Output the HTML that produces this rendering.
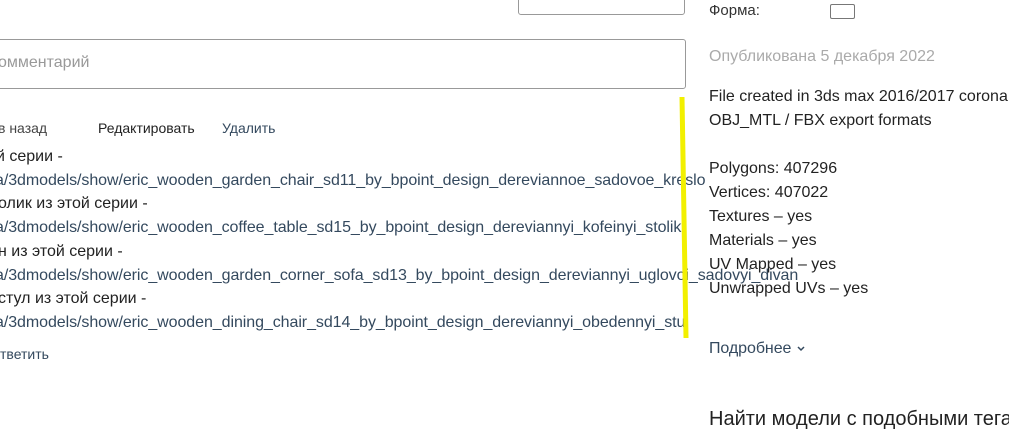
<!DOCTYPE html><html><head><meta charset="utf-8"><style>
body{margin:0;width:1009px;height:421px;overflow:hidden;background:#fff;font-family:"Liberation Sans",sans-serif;position:relative}
.a{position:absolute;white-space:nowrap;line-height:20px}
.t{font-size:16px;color:#222}
.l{font-size:16px;color:#34495e;letter-spacing:-0.07px}
</style></head><body>
<div style="position:absolute;left:518px;top:-6px;width:165px;height:19px;border:1px solid #999;border-radius:3px"></div>
<div style="position:absolute;left:-10px;top:39px;width:694px;height:48px;border:1px solid #999;border-radius:3px"></div>
<div class="a" style="left:-2px;top:53px;font-size:16px;color:#999">омментарий</div>
<div class="a" style="left:-2px;top:118px;font-size:14px;color:#444">в назад</div>
<div class="a" style="left:98px;top:118px;font-size:14px;color:#222">Редактировать</div>
<div class="a" style="left:222px;top:118px;font-size:14px;color:#34495e">Удалить</div>
<div class="a t" style="left:-4px;top:147px">й серии -</div>
<div class="a l" style="left:-5px;top:171px">a/3dmodels/show/eric_wooden_garden_chair_sd11_by_bpoint_design_dereviannoe_sadovoe_kreslo</div>
<div class="a t" style="left:-2px;top:194px">олик из этой серии -</div>
<div class="a l" style="left:-5px;top:218px">a/3dmodels/show/eric_wooden_coffee_table_sd15_by_bpoint_design_dereviannyi_kofeinyi_stolik</div>
<div class="a t" style="left:-2px;top:242px">н из этой серии -</div>
<div class="a l" style="left:-5px;top:266px">a/3dmodels/show/eric_wooden_garden_corner_sofa_sd13_by_bpoint_design_dereviannyi_uglovoi_sadovyi_divan</div>
<div class="a t" style="left:-2px;top:289px">стул из этой серии -</div>
<div class="a l" style="left:-5px;top:313px">a/3dmodels/show/eric_wooden_dining_chair_sd14_by_bpoint_design_dereviannyi_obedennyi_stul</div>
<div class="a" style="left:0;top:344px;font-size:14px;color:#34495e">тветить</div>
<svg style="position:absolute;left:0;top:0" width="1009" height="421"><path d="M682 97 L686 338" stroke="#f2f000" stroke-width="5"/></svg>
<div class="a t" style="left:709px;top:1px;color:#333;font-size:15px">Форма:</div>
<div style="position:absolute;left:830px;top:4px;width:23px;height:13px;border:1px solid #777;border-radius:2px"></div>
<div class="a t" style="left:709px;top:47px;color:#aaa">Опубликована 5 декабря 2022</div>
<div class="a t" style="left:709px;top:87px">File created in 3ds max 2016/2017 corona</div>
<div class="a t" style="left:709px;top:111px">OBJ_MTL / FBX export formats</div>
<div class="a t" style="left:709px;top:159px">Polygons: 407296</div>
<div class="a t" style="left:709px;top:183px">Vertices: 407022</div>
<div class="a t" style="left:709px;top:207px">Textures – yes</div>
<div class="a t" style="left:709px;top:231px">Materials – yes</div>
<div class="a t" style="left:709px;top:255px">UV Mapped – yes</div>
<div class="a t" style="left:709px;top:279px">Unwrapped UVs – yes</div>
<div class="a l" style="left:709px;top:339px">Подробнее</div>
<svg style="position:absolute;left:797px;top:346px" width="8" height="6"><path d="M1 1 L4 4 L7 1" stroke="#34495e" stroke-width="1.5" fill="none"/></svg>
<div class="a" style="left:709px;top:407px;font-size:20px;color:#222;line-height:24px">Найти модели с подобными тегами</div>
</body></html>
